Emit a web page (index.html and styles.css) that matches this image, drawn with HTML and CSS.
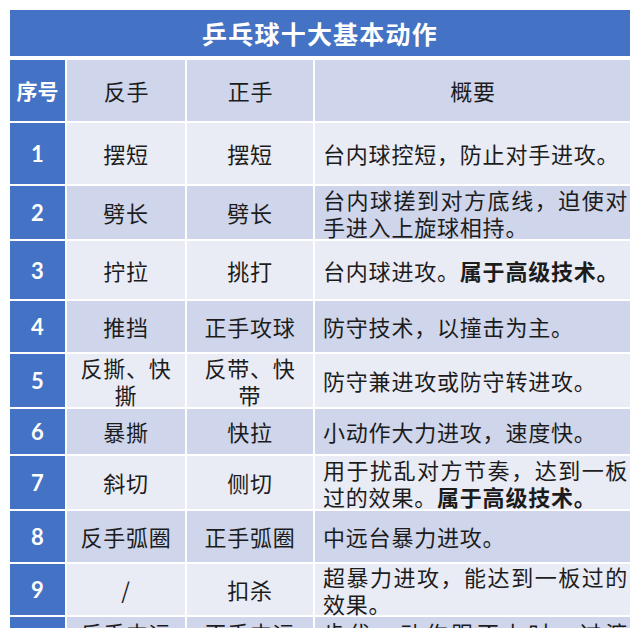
FILE: index.html
```html
<!DOCTYPE html>
<html lang="zh-CN">
<head>
<meta charset="utf-8">
<title>乒乓球十大基本动作</title>
<link rel="stylesheet" href="styles.css">
</head>
<body>
<div class="page">
  <div class="title">乒乓球十大基本动作</div>
  <div class="table">
    <div class="cell idx head-idx">序号</div>
    <div class="cell head">反手</div>
    <div class="cell head">正手</div>
    <div class="cell head">概要</div>

    <div class="cell idx">1</div>
    <div class="cell c light">摆短</div>
    <div class="cell c light">摆短</div>
    <div class="cell d light"><p class="t">台内球控短，防止对手进攻。</p></div>

    <div class="cell idx">2</div>
    <div class="cell c dark">劈长</div>
    <div class="cell c dark">劈长</div>
    <div class="cell d dark"><p class="t">台内球搓到对方底线，迫使对手进入上旋球相持。</p></div>

    <div class="cell idx">3</div>
    <div class="cell c light">拧拉</div>
    <div class="cell c light">挑打</div>
    <div class="cell d light"><p class="t">台内球进攻。<b>属于高级技术。</b></p></div>

    <div class="cell idx">4</div>
    <div class="cell c dark">推挡</div>
    <div class="cell c dark">正手攻球</div>
    <div class="cell d dark"><p class="t">防守技术，以撞击为主。</p></div>

    <div class="cell idx">5</div>
    <div class="cell c light"><p class="t">反撕、快撕</p></div>
    <div class="cell c light"><p class="t">反带、快带</p></div>
    <div class="cell d light"><p class="t">防守兼进攻或防守转进攻。</p></div>

    <div class="cell idx">6</div>
    <div class="cell c dark">暴撕</div>
    <div class="cell c dark">快拉</div>
    <div class="cell d dark"><p class="t">小动作大力进攻，速度快。</p></div>

    <div class="cell idx">7</div>
    <div class="cell c light">斜切</div>
    <div class="cell c light">侧切</div>
    <div class="cell d light"><p class="t">用于扰乱对方节奏，达到一板过的效果。<b>属于高级技术。</b></p></div>

    <div class="cell idx">8</div>
    <div class="cell c dark">反手弧圈</div>
    <div class="cell c dark">正手弧圈</div>
    <div class="cell d dark"><p class="t">中远台暴力进攻。</p></div>

    <div class="cell idx">9</div>
    <div class="cell c light">/</div>
    <div class="cell c light">扣杀</div>
    <div class="cell d light"><p class="t">超暴力进攻，能达到一板过的效果。</p></div>

    <div class="cell idx">10</div>
    <div class="cell c dark top"><p class="t">反手中远台</p></div>
    <div class="cell c dark top"><p class="t">正手中远台</p></div>
    <div class="cell d dark top"><p class="t">步伐、动作跟不上时，过渡球。</p></div>
  </div>
</div>
</body>
</html>
```

FILE: styles.css
```css
html, body {
  margin: 0;
  padding: 0;
  background: #ffffff;
}

body {
  font-family: "Noto Sans CJK SC", "Noto Sans", sans-serif;
  color: #1c1c1c;
}

.page {
  width: 620px;
  height: 618px;
  padding: 10px 10px 0 10px;
  overflow: hidden;
}

.title {
  height: 46px;
  background: #4472c4;
  color: #ffffff;
  font-weight: 700;
  font-size: 25px;
  letter-spacing: 1.2px;
  display: flex;
  align-items: center;
  justify-content: center;
  margin-bottom: 4px;
}

.table {
  display: grid;
  grid-template-columns: 55px 118px 126px 315px;
  grid-template-rows: 61px 61px 53px 58px 51px 53px 45px 53px 51px 51px 60px;
  column-gap: 2px;
  row-gap: 2px;
}

.cell {
  display: flex;
  align-items: center;
  font-size: 22px;
  letter-spacing: 0.8px;
  line-height: 27px;
  min-width: 0;
}

.t {
  margin: 0;
  width: 100%;
}

.idx {
  background: #4472c4;
  color: #ffffff;
  font-weight: 700;
  justify-content: center;
  font-family: "Lato", "Open Sans", sans-serif;
  font-size: 22px;
  letter-spacing: 0;
}

.head-idx {
  font-family: "Noto Sans CJK SC", sans-serif;
  font-size: 21px;
  letter-spacing: 0;
}

.head {
  background: #cfd5ea;
  justify-content: center;
  text-align: center;
  padding-left: 1px;
}

.c {
  justify-content: center;
  text-align: center;
  padding: 0 7px;
}

.d {
  padding: 0 2px 0 8px;
  text-align: justify;
}

.light {
  background: #e9ebf5;
}

.dark {
  background: #cfd5ea;
}

.top {
  align-items: flex-start;
  padding-top: 2px;
}

b {
  font-weight: 700;
}
```
